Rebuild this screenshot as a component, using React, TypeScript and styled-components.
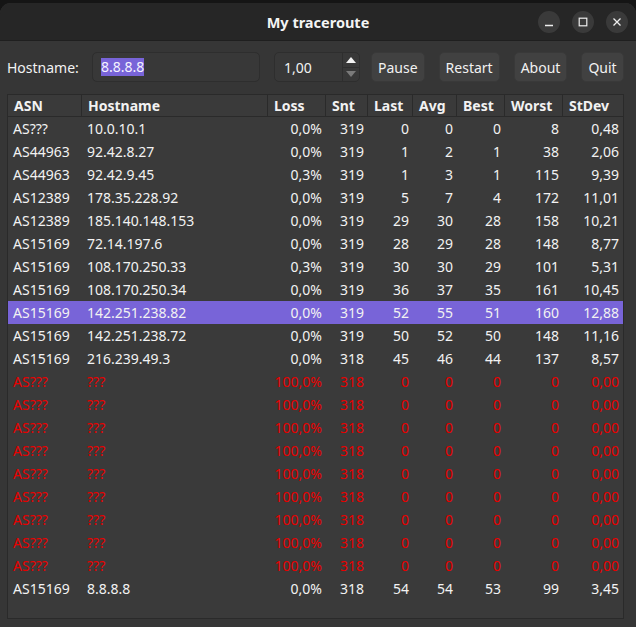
import * as React from 'react';
import styled, { createGlobalStyle } from 'styled-components';

const colors = {
  desk: '#151515',
  title: '#262626',
  body: '#363636',
  table: '#3a3a3a',
  line: '#2a2a2a',
  field: '#383838',
  button: '#414141',
  text: '#f2f2f2',
  red: '#e80000',
  accent: '#7864d8'
};

const GlobalStyle = createGlobalStyle`
  html, body {
    margin: 0;
    padding: 0;
    background: ${colors.desk};
  }
  body {
    font-family: "Noto Sans", "DejaVu Sans", sans-serif;
    font-size: 14px;
    color: ${colors.text};
  }
`;

type Hop = [string, string, string, number, number, number, number, number, string];

const hops: Hop[] = [
  ['AS???', '10.0.10.1', '0,0%', 319, 0, 0, 0, 8, '0,48'],
  ['AS44963', '92.42.8.27', '0,0%', 319, 1, 2, 1, 38, '2,06'],
  ['AS44963', '92.42.9.45', '0,3%', 319, 1, 3, 1, 115, '9,39'],
  ['AS12389', '178.35.228.92', '0,0%', 319, 5, 7, 4, 172, '11,01'],
  ['AS12389', '185.140.148.153', '0,0%', 319, 29, 30, 28, 158, '10,21'],
  ['AS15169', '72.14.197.6', '0,0%', 319, 28, 29, 28, 148, '8,77'],
  ['AS15169', '108.170.250.33', '0,3%', 319, 30, 30, 29, 101, '5,31'],
  ['AS15169', '108.170.250.34', '0,0%', 319, 36, 37, 35, 161, '10,45'],
  ['AS15169', '142.251.238.82', '0,0%', 319, 52, 55, 51, 160, '12,88'],
  ['AS15169', '142.251.238.72', '0,0%', 319, 50, 52, 50, 148, '11,16'],
  ['AS15169', '216.239.49.3', '0,0%', 318, 45, 46, 44, 137, '8,57'],
  ...Array.from({ length: 9 }, (): Hop => ['AS???', '???', '100,0%', 318, 0, 0, 0, 0, '0,00']),
  ['AS15169', '8.8.8.8', '0,0%', 318, 54, 54, 53, 99, '3,45']
];

const headers = ['ASN', 'Hostname', 'Loss', 'Snt', 'Last', 'Avg', 'Best', 'Worst', 'StDev'];
const SELECTED = 8;

const MinIcon = () => (
  <svg width="10" height="10" viewBox="0 0 10 10">
    <path d="M1 8.5h8" stroke="#eee" strokeWidth="1.3" />
  </svg>
);
const MaxIcon = () => (
  <svg width="10" height="10" viewBox="0 0 10 10">
    <rect x="1.2" y="1.2" width="7.6" height="7.6" fill="none" stroke="#eee" strokeWidth="1.2" />
  </svg>
);
const CloseIcon = () => (
  <svg width="10" height="10" viewBox="0 0 10 10">
    <path d="M1.5 1.5l7 7M8.5 1.5l-7 7" stroke="#eee" strokeWidth="1.3" />
  </svg>
);

const App = () => (
  <Screen>
    <GlobalStyle />
    <Window>
      <TitleBar>
        <Title>My traceroute</Title>
        <Controls>
          <CtlButton><MinIcon /></CtlButton>
          <CtlButton><MaxIcon /></CtlButton>
          <CtlButton><CloseIcon /></CtlButton>
        </Controls>
      </TitleBar>
      <Toolbar>
        <Label>Hostname:</Label>
        <HostField>
          <Selected>8.8.8.8</Selected>
        </HostField>
        <Spin>
          <SpinValue>1,00</SpinValue>
          <SpinArrows>
            <Arrow><svg width="10" height="6" viewBox="0 0 10 6"><path d="M0 6L5 0l5 6z" fill="#f2f2f2" /></svg></Arrow>
            <Arrow><svg width="10" height="6" viewBox="0 0 10 6"><path d="M0 0h10L5 6z" fill="#7a7a7a" /></svg></Arrow>
          </SpinArrows>
        </Spin>
        <Buttons>
          <Button>Pause</Button>
          <Button>Restart</Button>
          <Button>About</Button>
          <Button>Quit</Button>
        </Buttons>
      </Toolbar>
      <TableFrame>
        <HeaderRow>
          {headers.map((h) => (
            <HeadCell key={h}>{h}</HeadCell>
          ))}
        </HeaderRow>
        {hops.map((hop, i) => {
          const lost = hop[2] === '100,0%';
          return (
            <Row key={i} selected={i === SELECTED} lost={lost}>
              <Cell>{hop[0]}</Cell>
              <Cell>{hop[1]}</Cell>
              {hop.slice(2).map((v, j) => (
                <Cell key={j} num>{v}</Cell>
              ))}
            </Row>
          );
        })}
      </TableFrame>
    </Window>
  </Screen>
);

const Screen = styled.div`
  width: 636px;
  height: 627px;
  padding-top: 3px;
  box-sizing: border-box;
  background: ${colors.desk};
  overflow: hidden;
`;

const Window = styled.div`
  height: 624px;
  background: ${colors.body};
  border-radius: 11px 11px 0 0;
  overflow: hidden;
  display: flex;
  flex-direction: column;
`;

const TitleBar = styled.div`
  position: relative;
  height: 37px;
  flex-shrink: 0;
  background: ${colors.title};
  border-bottom: 1px solid #1f1f1f;
  display: flex;
  align-items: center;
  justify-content: center;
`;

const Title = styled.div`
  font-weight: 700;
  font-size: 14.5px;
  color: #f4f4f4;
`;

const Controls = styled.div`
  position: absolute;
  right: 8px;
  top: 8px;
  display: flex;
  gap: 12px;
`;

const CtlButton = styled.div`
  width: 22px;
  height: 22px;
  border-radius: 50%;
  background: #3a3a3a;
  display: flex;
  align-items: center;
  justify-content: center;
`;

const Toolbar = styled.div`
  display: flex;
  align-items: center;
  height: 30px;
  padding: 11px 13px 0 7px;
`;

const Label = styled.div`
  width: 85px;
  flex-shrink: 0;
`;

const Field = styled.div`
  height: 30px;
  flex-shrink: 0;
  box-sizing: border-box;
  background: ${colors.field};
  border: 1px solid #2e2e2e;
  border-radius: 5px;
  display: flex;
  align-items: center;
`;

const HostField = styled(Field)`
  width: 168px;
  padding-left: 8px;
`;

const Selected = styled.span`
  background: ${colors.accent};
  color: #f4f2ff;
  line-height: 18px;
`;

const Spin = styled(Field)`
  width: 86px;
  margin-left: 14px;
  overflow: hidden;
`;

const SpinValue = styled.div`
  flex: 1;
  padding-left: 9px;
`;

const SpinArrows = styled.div`
  width: 16px;
  height: 100%;
  border-left: 1px solid #2e2e2e;
  display: flex;
  flex-direction: column;

  > *:first-child {
    border-bottom: 1px solid #2e2e2e;
  }
`;

const Arrow = styled.div`
  flex: 1;
  display: flex;
  align-items: center;
  justify-content: center;
`;

const Buttons = styled.div`
  display: flex;
  gap: 14px;
  margin-left: 11px;
`;

const Button = styled.div`
  height: 30px;
  box-sizing: border-box;
  padding: 0 6px;
  background: ${colors.button};
  border: 1px solid #393939;
  border-radius: 5px;
  display: flex;
  align-items: center;
`;

const cols = '74px 186px 58px 42px 45px 44px 48px 58px 60px';

const TableFrame = styled.div`
  margin: 12px 12px 0 7px;
  height: 525px;
  box-sizing: border-box;
  border: 1px solid ${colors.line};
  background: ${colors.table};
`;

const HeaderRow = styled.div`
  display: grid;
  grid-template-columns: ${cols};
  height: 22px;
  box-sizing: border-box;
  border-bottom: 1px solid ${colors.line};
`;

const HeadCell = styled.div`
  font-weight: 700;
  padding-left: 6px;
  line-height: 21px;
  border-right: 1px solid ${colors.line};

  &:last-child {
    border-right: none;
  }
`;

const Row = styled.div<{ selected?: boolean; lost?: boolean }>`
  display: grid;
  grid-template-columns: ${cols};
  height: 23px;
  align-items: center;
  background: ${(p) => (p.selected ? colors.accent : 'transparent')};
  color: ${(p) => (p.lost ? colors.red : colors.text)};
`;

const Cell = styled.div<{ num?: boolean }>`
  padding: 0 ${(p) => (p.num ? '4px' : '0')} 0 ${(p) => (p.num ? '0' : '5px')};
  text-align: ${(p) => (p.num ? 'right' : 'left')};
  white-space: nowrap;
  overflow: hidden;
`;

export default App;
